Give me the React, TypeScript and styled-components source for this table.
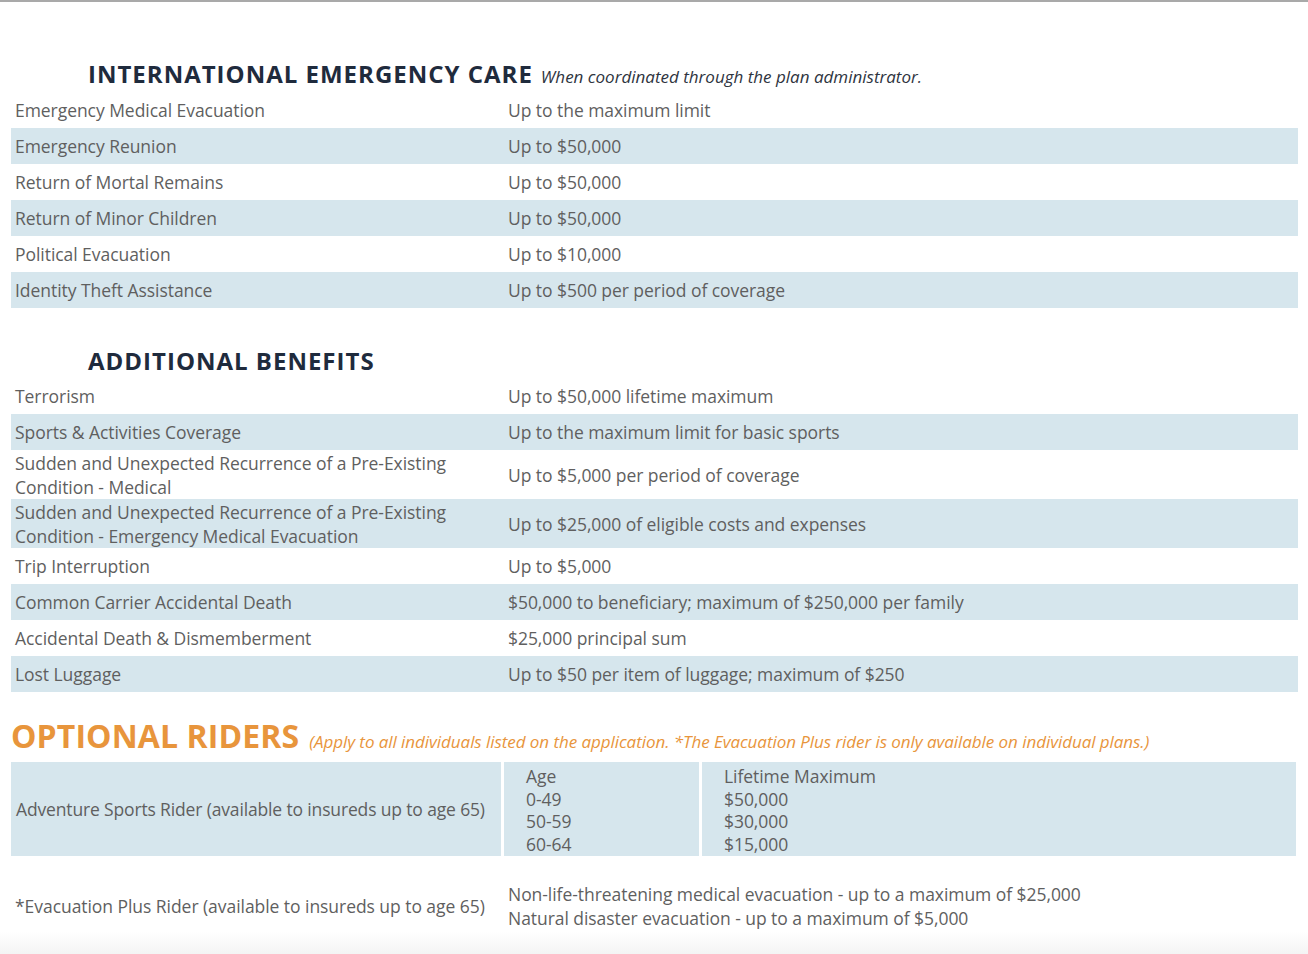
import React from "react";
import styled, { createGlobalStyle } from "styled-components";

const Global = createGlobalStyle`
  html, body { margin: 0; padding: 0; background: #fff; }
  body { font-family: "Open Sans", "Liberation Sans", sans-serif; }
`;

const Page = styled.div`
  width: 1308px;
  height: 954px;
  box-sizing: border-box;
  border-top: 2px solid #a9a9a9;
  background: linear-gradient(to bottom, #fff 0, #fff 930px, #f3f3f3 954px);
  padding: 0 10px 0 11px;
  overflow: hidden;
`;

const Section = styled.section<{ $top: number }>`
  margin-top: ${(p) => p.$top}px;
  display: flex;
  flex-direction: column;
`;

const Heading = styled.div<{ $indent: number; $h: number; $pt: number }>`
  height: ${(p) => p.$h}px;
  display: flex;
  align-items: baseline;
  padding-left: ${(p) => p.$indent}px;
  padding-top: ${(p) => p.$pt}px;
  box-sizing: border-box;
`;

const Title = styled.h2<{ $orange?: boolean; $size: number }>`
  margin: 0;
  font-family: "Open Sans", sans-serif;
  font-weight: 700;
  font-size: ${(p) => p.$size}px;
  line-height: 1;
  letter-spacing: ${(p) => (p.$orange ? 0.1 : 1)}px;
  color: ${(p) => (p.$orange ? "#e8953c" : "#1f2b3d")};
  white-space: nowrap;
`;

const Sub = styled.span<{ $orange?: boolean }>`
  margin-left: ${(p) => (p.$orange ? 10 : 8)}px;
  font-style: italic;
  font-size: 17px;
  letter-spacing: ${(p) => (p.$orange ? -0.06 : 0)}px;
  color: ${(p) => (p.$orange ? "#e8953c" : "#2e3440")};
  white-space: nowrap;
`;

const Row = styled.div<{ $striped: boolean; $h?: number }>`
  display: grid;
  grid-template-columns: 497px 1fr;
  align-items: center;
  height: ${(p) => p.$h ?? 36}px;
  background: ${(p) => (p.$striped ? "#d6e6ed" : "transparent")};
  color: #5f5f5f;
  font-size: 17.5px;
  letter-spacing: -0.05px;
  line-height: 24px;
`;

const Label = styled.div`
  padding-left: 4px;
`;

const Value = styled.div``;

const RiderTable = styled.div`
  display: grid;
  grid-template-columns: 490px 195px 1fr;
  column-gap: 3px;
  height: 93px;
  width: 1285px;
  color: #5f5f5f;
  font-size: 17.5px;
  letter-spacing: -0.05px;
`;

const Cell = styled.div<{ $pad: number; $center?: boolean }>`
  background: #d6e6ed;
  padding-left: ${(p) => p.$pad}px;
  display: flex;
  flex-direction: column;
  justify-content: ${(p) => (p.$center ? "center" : "flex-start")};
  padding-top: ${(p) => (p.$center ? 0 : 3)}px;
  line-height: 22.7px;
  letter-spacing: ${(p) => (p.$center ? -0.15 : -0.05)}px;
`;

const EvacRow = styled.div`
  display: grid;
  grid-template-columns: 497px 1fr;
  align-items: center;
  margin-top: 27px;
  color: #5f5f5f;
  font-size: 17.5px;
  letter-spacing: -0.05px;
  line-height: 24px;
`;

const Lines = styled.div`
  display: flex;
  flex-direction: column;
`;

const iec: [string, string][] = [
  ["Emergency Medical Evacuation", "Up to the maximum limit"],
  ["Emergency Reunion", "Up to $50,000"],
  ["Return of Mortal Remains", "Up to $50,000"],
  ["Return of Minor Children", "Up to $50,000"],
  ["Political Evacuation", "Up to $10,000"],
  ["Identity Theft Assistance", "Up to $500 per period of coverage"],
];

const add: [React.ReactNode, string, number?][] = [
  ["Terrorism", "Up to $50,000 lifetime maximum"],
  ["Sports & Activities Coverage", "Up to the maximum limit for basic sports"],
  [
    <>Sudden and Unexpected Recurrence of a Pre-Existing<br />Condition - Medical</>,
    "Up to $5,000 per period of coverage",
    49,
  ],
  [
    <>Sudden and Unexpected Recurrence of a Pre-Existing<br />Condition - Emergency Medical Evacuation</>,
    "Up to $25,000 of eligible costs and expenses",
    49,
  ],
  ["Trip Interruption", "Up to $5,000"],
  ["Common Carrier Accidental Death", "$50,000 to beneficiary; maximum of $250,000 per family"],
  ["Accidental Death & Dismemberment", "$25,000 principal sum"],
  ["Lost Luggage", "Up to $50 per item of luggage; maximum of $250"],
];

export default function App() {
  return (
    <>
      <Global />
      <Page>
        <Section $top={54}>
          <Heading $indent={77} $h={36} $pt={6}>
            <Title $size={24}>INTERNATIONAL EMERGENCY CARE</Title>
            <Sub>When coordinated through the plan administrator.</Sub>
          </Heading>
          {iec.map(([l, v], i) => (
            <Row key={i} $striped={i % 2 === 1}>
              <Label>{l}</Label>
              <Value>{v}</Value>
            </Row>
          ))}
        </Section>
        <Section $top={34}>
          <Heading $indent={77} $h={36} $pt={7}>
            <Title $size={24}>ADDITIONAL BENEFITS</Title>
          </Heading>
          {add.map(([l, v, h], i) => (
            <Row key={i} $striped={i % 2 === 1} $h={h}>
              <Label>{l}</Label>
              <Value>{v}</Value>
            </Row>
          ))}
        </Section>
        <Section $top={24}>
          <Heading $indent={0} $h={46} $pt={4}>
            <Title $orange $size={32}>OPTIONAL RIDERS</Title>
            <Sub $orange>
              (Apply to all individuals listed on the application. *The Evacuation Plus rider is only available on individual plans.)
            </Sub>
          </Heading>
          <RiderTable>
            <Cell $pad={5} $center>
              Adventure Sports Rider (available to insureds up to age 65)
            </Cell>
            <Cell $pad={22}>
              <span>Age</span>
              <span>0-49</span>
              <span>50-59</span>
              <span>60-64</span>
            </Cell>
            <Cell $pad={22}>
              <span>Lifetime Maximum</span>
              <span>$50,000</span>
              <span>$30,000</span>
              <span>$15,000</span>
            </Cell>
          </RiderTable>
          <EvacRow>
            <Label>*Evacuation Plus Rider (available to insureds up to age 65)</Label>
            <Lines>
              <span>Non-life-threatening medical evacuation - up to a maximum of $25,000</span>
              <span>Natural disaster evacuation - up to a maximum of $5,000</span>
            </Lines>
          </EvacRow>
        </Section>
      </Page>
    </>
  );
}
